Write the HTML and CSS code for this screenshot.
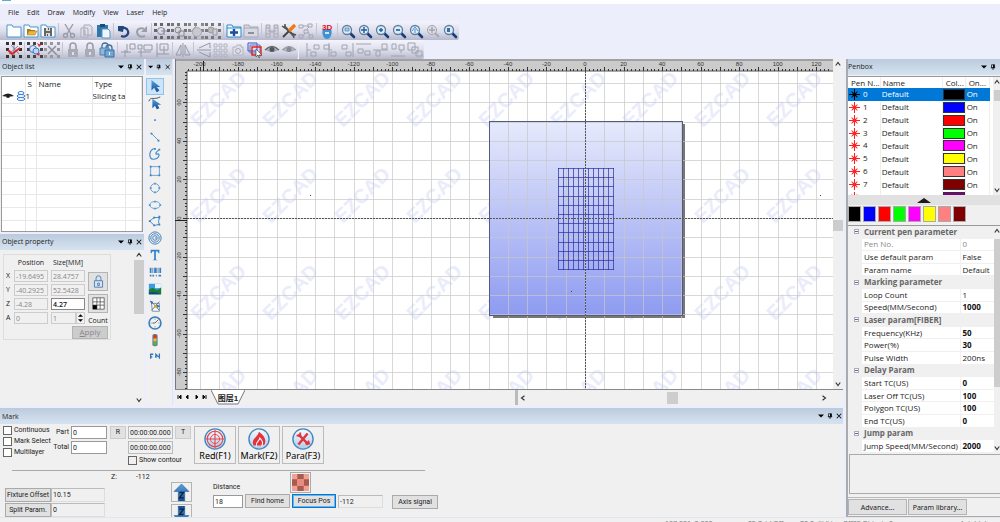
FILE: index.html
```html
<!DOCTYPE html>
<html lang="en">
<head>
<meta charset="utf-8">
<title>EZCAD</title>
<link rel="stylesheet" href="styles.css">
</head>
<body>
<svg class="defs" aria-hidden="true">
  <defs>
    <linearGradient id="blue" x1="0" y1="0" x2="0" y2="1"><stop offset="0" stop-color="#5aa2e0"/><stop offset="1" stop-color="#0f4f98"/></linearGradient>
    <linearGradient id="area" x1="0" y1="0" x2="0" y2="1"><stop offset="0" stop-color="#e6eafc"/><stop offset="1" stop-color="#8e9bf0"/></linearGradient>
    <linearGradient id="disc" x1="0" y1="0" x2="0" y2="1"><stop offset="0" stop-color="#f6fbff"/><stop offset="1" stop-color="#aecbe8"/></linearGradient>
    <g id="nodes"><path d="M0 0h3v3H0zM6 0h3v3H6zM13 0h3v3h-3zM0 6h3v3H0zM13 6h3v3h-3zM0 13h3v3H0zM6 13h3v3H6zM13 13h3v3h-3z"/></g>
    <symbol id="new" viewBox="0 0 16 16"><path d="M1 2h5l1 2h8v10H1z" fill="#fcfdff" stroke="#4a97cf"/></symbol>
    <symbol id="open" viewBox="0 0 16 16"><path d="M1 2h5l1 2h8v10H1z" fill="#fcfdff" stroke="#4a97cf"/><path d="M4 12V6h3l1 1h4v2z" fill="#a87a14"/><path d="M4 12l2-4h8l-2 4z" fill="#ecb63c" stroke="#a87a14" stroke-width=".5"/></symbol>
    <symbol id="save" viewBox="0 0 16 16"><path d="M1 2h5l1 2h8v10H1z" fill="#fcfdff" stroke="#4a97cf"/><path d="M4 5h8v8H4z" fill="#666"/><path d="M6 5h4v3H6zM6 10h4v3H6z" fill="#ddd"/><path d="M8 5h1v2H8zM7 11h1v2H7z" fill="#555"/></symbol>
    <symbol id="cut" viewBox="0 0 16 16"><g fill="none" stroke="#9a9ca8" stroke-width="1.4"><path d="M4 1l6 10M12 1L6 11"/><circle cx="4.500" cy="12.500" r="2"/><circle cx="11.500" cy="12.500" r="2"/></g></symbol>
    <symbol id="copy" viewBox="0 0 16 16"><path d="M6 2h6l2 2v8H6zM3 5h6l1 1v8H3z" fill="#dfe0ea" stroke="#a9abb8"/><path d="M5 8h3M5 10h3M5 12h3" stroke="#a9abb8"/></symbol>
    <symbol id="paste" viewBox="0 0 16 16"><path d="M2 2h11v12H2z" fill="#2f78ad"/><path d="M5 1h5v3H5z" fill="#1d4d75"/><path d="M7 6h6l2 2v7H7z" fill="#eef6fd" stroke="#5a93bf"/></symbol>
    <symbol id="undo" viewBox="0 0 16 16"><path d="M5 13c5 2 8-2 7-5s-4-4-7-2" fill="none" stroke="#24467e" stroke-width="2.200"/><path d="M2 3l6 0-1 6-5-1z" fill="#24467e"/></symbol>
    <symbol id="redo" viewBox="0 0 16 16"><path d="M12 13c-5 2-8-1-8-4s4-5 7-3" fill="none" stroke="#9b9eaa" stroke-width="2"/><path d="M14 3v6H8z" fill="#9b9eaa"/></symbol>
    <symbol id="group1" viewBox="0 0 16 16"><use href="#nodes" fill="#666"/><circle cx="7" cy="8" r="3.500" fill="none" stroke="#8a8c98"/><path d="M7 8h6M10 5v7" stroke="#8a8c98"/></symbol>
    <symbol id="group2" viewBox="0 0 16 16"><use href="#nodes" fill="#777"/><circle cx="7" cy="7" r="3" fill="#d4d5de" stroke="#888"/><path d="M8 8h5v5H8z" fill="none" stroke="#888"/></symbol>
    <symbol id="group3" viewBox="0 0 16 16"><use href="#nodes" fill="#888"/><circle cx="9" cy="9" r="4.500" fill="#c7c8d0" stroke="#aaa"/><path d="M3 9l5-6" stroke="#999"/></symbol>
    <symbol id="group4" viewBox="0 0 16 16"><use href="#nodes" fill="#777"/><circle cx="6" cy="7" r="3" fill="#bbb" stroke="#999"/><path d="M8 6h4v6H8z" fill="#cfd0d8" stroke="#999"/></symbol>
    <symbol id="fplus" viewBox="0 0 16 16"><path d="M1 2h5l1 2h8v10H1z" fill="#f3faff" stroke="#2d8bcd"/><path d="M1 5h14" stroke="#2d8bcd"/><path d="M8 6v7M4 9.500h8" stroke="#1b4f9c" stroke-width="2.400"/></symbol>
    <symbol id="fminus" viewBox="0 0 16 16"><path d="M1 2h5l1 2h8v10H1z" fill="#d7d8e2" stroke="#a6a8b6"/><path d="M1 5h14" stroke="#a6a8b6"/><path d="M5 10h6" stroke="#8d8f9d" stroke-width="2"/></symbol>
    <symbol id="hatch" viewBox="0 0 16 16"><path d="M2 2h4v12H2zM10 2h4v12h-4z" fill="#d2d3dd" stroke="#a6a8b4"/><path d="M2 5h4M10 5h4M4 8h8M2 11h4M10 11h4M6 9h4" stroke="#a6a8b4"/></symbol>
    <symbol id="tools" viewBox="0 0 16 16"><path d="M3 3l10 10" stroke="#555" stroke-width="2.400"/><path d="M1 3l3 2V1M15 12l-3-1 1 4" fill="none" stroke="#555" stroke-width="1.500"/><path d="M2 14l6-6" stroke="#444" stroke-width="2"/><path d="M8 8l6-6" stroke="#f07a18" stroke-width="3.200"/></symbol>
    <symbol id="flow" viewBox="0 0 16 16"><g fill="none" stroke="#a4a6b2"><path d="M1 2h4v3H1zM10 1h4v3h-4zM1 12h4v3H1zM11 12h4v3h-4zM6 7h4v3H6zM5 3l6 0M8 7l3-3M5 13l2-3M10 9l2 3"/></g></symbol>
    <symbol id="three" viewBox="0 0 16 16"><path d="M4 6c-2 5 1 10 4 10s6-5 4-10z" fill="#3f93d3"/><path d="M6 9h4v2H6z" fill="#cfe6f7"/><text x="3" y="7" class="t3d">3D</text></symbol>
    <symbol id="lens" viewBox="0 0 16 16"><path d="M10 10l4 4" stroke="#173f7c" stroke-width="2.600" stroke-linecap="round"/><circle cx="7" cy="7" r="4.500" fill="#d9ecfa" stroke="#5f7f9f" stroke-width="1.300"/></symbol>
    <symbol id="zwin" viewBox="0 0 16 16"><use href="#lens"/><path d="M5 5h4v3H5z" fill="#a9cde8" stroke="#3870a5" stroke-width=".6"/></symbol>
    <symbol id="zmove" viewBox="0 0 16 16"><use href="#lens"/><path d="M7 4v6M4 7h6" stroke="#235b9a" stroke-width="1.400"/></symbol>
    <symbol id="zin" viewBox="0 0 16 16"><use href="#lens"/><path d="M7 5v4M5 7h4" stroke="#235b9a" stroke-width="1.400"/></symbol>
    <symbol id="zout" viewBox="0 0 16 16"><use href="#lens"/><path d="M5 7h4" stroke="#235b9a" stroke-width="1.600"/></symbol>
    <symbol id="zall" viewBox="0 0 16 16"><use href="#lens"/><path d="M4 8l3-4 3 4M7 6v4" fill="none" stroke="#5593c8"/></symbol>
    <symbol id="zgray" viewBox="0 0 16 16"><path d="M10 10l4 4" stroke="#aaacb7" stroke-width="2.400"/><circle cx="7" cy="7" r="4.500" fill="#dcdde6" stroke="#a2a4b0"/><path d="M7 4v6M4 7h6" stroke="#8d8f9b"/></symbol>
    <symbol id="zpage" viewBox="0 0 16 16"><use href="#lens"/><path d="M5 5h3v4H5z" fill="#3c6d9e"/></symbol>
    <symbol id="check" viewBox="0 0 16 16"><use href="#nodes" fill="#333"/><path d="M5 3l8 9M3 12l9-8M8 2v12" stroke="#667" stroke-width=".7"/><path d="M2 8l4 4 8-6" fill="none" stroke="#e02025" stroke-width="1.800"/></symbol>
    <symbol id="swap" viewBox="0 0 16 16"><use href="#nodes" fill="#444"/><circle cx="6" cy="7" r="3.500" fill="none" stroke="#3b79c4"/><circle cx="9" cy="9" r="3" fill="#bcd6f2" stroke="#3b79c4"/><path d="M10 1l4 2-2 2zM12 14l-3-2 4-1z" fill="#e02a2a"/></symbol>
    <symbol id="nosel" viewBox="0 0 16 16"><use href="#nodes" fill="#999"/><path d="M4 4l9 9M12 4l-8 8" stroke="#8b8d99" stroke-width="1.500"/></symbol>
    <symbol id="glock" viewBox="0 0 16 16"><path d="M5 8V4q0-3 3-3t3 3v4" fill="none" stroke="#9a9ca8" stroke-width="1.600"/><path d="M3 7h10v8H3z" fill="#a8aab6"/><path d="M7 10h2v3H7z" fill="#dfe0e8"/></symbol>
    <symbol id="block" viewBox="0 0 16 16"><path d="M3 7V4q0-3 3-3t3 3v3M7 9V6q0-3 3-3t3 3v3" fill="none" stroke="#3e6f9e" stroke-width="1.300"/><path d="M1 6h9v7H1z" fill="#8db8dc" stroke="#4e7fae"/><path d="M6 8h9v7H6z" fill="#6fa8d8" stroke="#3c6d9d"/><path d="M10 10h1v3h-1z" fill="#fff"/></symbol>
    <symbol id="al1" viewBox="0 0 16 16"><g fill="none" stroke="#9698a6"><path d="M10 2h5v5h-5zM7 2v9M1 10h10M5 8v7"/></g></symbol>
    <symbol id="al2" viewBox="0 0 16 16"><g fill="none" stroke="#9698a6"><path d="M1 3h4v4H1zM7 3h8v5H7zM4 8v7M1 10h13"/></g></symbol>
    <symbol id="al3" viewBox="0 0 16 16"><g fill="none" stroke="#9698a6"><path d="M3 1v14M6 2h8v6H6zM10 4v8M3 12h12"/></g></symbol>
    <symbol id="mir" viewBox="0 0 16 16"><g fill="none" stroke="#9698a6"><path d="M8 1v14M6 3v10H1zM10 3v10h5z"/></g></symbol>
    <symbol id="mirv" viewBox="0 0 16 16"><g fill="none" stroke="#9698a6"><path d="M1 8h14M14 6V1L3 6M14 10v5L3 10"/></g></symbol>
    <symbol id="array" viewBox="0 0 16 16"><g fill="none" stroke="#b1b3bf"><path d="M1 2h3v3H1zM6 2h3v3H6zM11 2h3v3h-3zM1 7h3v3H1zM6 7h3v3H6zM11 7h3v3h-3zM1 12h3v3H1zM6 12h3v3H6zM11 12h3v3h-3z"/></g></symbol>
    <symbol id="cam" viewBox="0 0 16 16"><path d="M3 5h3l1-2h4v2h2v8H3z" fill="#dedfe8" stroke="#b2b4c0"/><circle cx="8" cy="9" r="2.500" fill="none" stroke="#a6a8b4"/></symbol>
    <symbol id="layers" viewBox="0 0 16 16"><g fill="none"><path d="M1 1h9v8H1z" stroke="#3556c0"/><path d="M3 3h10v8H3z" stroke="#5e70c4"/><path d="M5 5h9v8H5z" stroke="#e02424" stroke-width="1.400"/></g><path d="M9 7v8l2-2 1 3 1-1-1-2h3z" fill="#fff" stroke="#333" stroke-width=".6"/></symbol>
    <symbol id="eye" viewBox="0 0 16 16"><path d="M1 8q7-7 14 0q-7 4-14 0" fill="#a7a9b4"/><circle cx="8" cy="7.500" r="2.500" fill="#53555d"/><path d="M1 8q7-7 14 0" stroke="#666" stroke-width="1.200" fill="none"/></symbol>
    <symbol id="eye2" viewBox="0 0 16 16"><path d="M1 8q7-7 14 0q-7 4-14 0" fill="#aeb0ba"/><circle cx="8" cy="7.500" r="2.500" fill="#878993"/><path d="M1 8q7-7 14 0" stroke="#8e909a" fill="none"/></symbol>
    <symbol id="d1" viewBox="0 0 16 16"><path d="M2 1v14M2 8h4M6 10h5v4H6zM9 3h5v4H9z" fill="none" stroke="#a0a2af"/></symbol>
    <symbol id="d2" viewBox="0 0 16 16"><path d="M7 1v14M2 3h5v4H2zM9 10h5v4H9zM7 8h3" fill="none" stroke="#a0a2af"/></symbol>
    <symbol id="d3" viewBox="0 0 16 16"><path d="M14 1v14M3 3h5v4H3zM7 10h5v4H7z" fill="none" stroke="#a0a2af"/></symbol>
    <symbol id="d4" viewBox="0 0 16 16"><path d="M0 2h15M2 7h5v4H2zM9 9h5v4H9z" fill="none" stroke="#a0a2af"/></symbol>
    <symbol id="d5" viewBox="0 0 16 16"><path d="M0 8h15M3 9h4v5H3zM9 2h5v5H9z" fill="none" stroke="#a0a2af"/></symbol>
    <symbol id="d6" viewBox="0 0 16 16"><path d="M2 2h4v5H2zM9 3h5v5H9zM11 8v3M1 14h14" fill="none" stroke="#a0a2af"/></symbol>
    <symbol id="d7" viewBox="0 0 16 16"><path d="M1 1h7v7H1zM5 5h6v6H5zM9 9h6v5H9z" fill="none" stroke="#a0a2af"/></symbol>

    <symbol id="pick" viewBox="0 0 16 16"><path d="M4 1v12l3-3 3 5 3-2-3-4h4z" fill="url(#blue)"/></symbol>
    <symbol id="node" viewBox="0 0 16 16"><path d="M1 6C3 0 7 5 14 1" fill="none" stroke="#345"/><path d="M5 3v11l3-3 2 4 3-1-2-4h4z" fill="url(#blue)"/></symbol>
    <symbol id="dot" viewBox="0 0 16 16"><path d="M7 7h2v2H7z" fill="#4b8fd0"/></symbol>
    <symbol id="line" viewBox="0 0 16 16"><path d="M4 4l8 8" stroke="#4b8fd0"/><path d="M3 3h2v2H3zM11 11h2v2h-2z" fill="#2f78c0"/></symbol>
    <symbol id="curve" viewBox="0 0 16 16"><path d="M8 2C1 2 0 14 6 14c7 0 8-7 5-6s-3-2 2-5" fill="none" stroke="#3d88cc" stroke-width="1.300"/><path d="M7 1h2v2H7zM12 2h2v2h-2z" fill="#3d88cc"/></symbol>
    <symbol id="rect" viewBox="0 0 16 16"><path d="M3 3h10v10H3z" fill="none" stroke="#5a9ad4"/><path d="M2 2h2v2H2zM12 2h2v2h-2zM2 12h2v2H2zM12 12h2v2h-2z" fill="#3d7fc0"/></symbol>
    <symbol id="circ" viewBox="0 0 16 16"><circle cx="8" cy="8" r="5" fill="none" stroke="#5a9ad4"/><path d="M7 2h2v2H7zM7 12h2v2H7zM2 7h2v2H2zM12 7h2v2h-2z" fill="#5a97d0"/></symbol>
    <symbol id="oval" viewBox="0 0 16 16"><ellipse cx="8" cy="8" rx="6" ry="4" fill="none" stroke="#5a9ad4"/><path d="M7 3h2v2H7zM7 11h2v2H7zM1 7h2v2H1zM13 7h2v2h-2z" fill="#5a97d0"/></symbol>
    <symbol id="poly" viewBox="0 0 16 16"><path d="M2 8l5-4h6l-1 5 1 3-6 1z" fill="none" stroke="#3d88cc" stroke-width="1.100"/><path d="M12 2h2v3h-2zM6 12h2v2H6zM12 11h2v2h-2zM1 7h2v2H1zM6 3h2v2H6z" fill="#3d7fc0"/></symbol>
    <symbol id="spiral" viewBox="0 0 16 16"><g fill="none" stroke="#3d80bd" stroke-width="1.100"><circle cx="8" cy="8" r="7"/><circle cx="8" cy="8" r="4.800"/><circle cx="8" cy="8" r="2.600"/><path d="M8 8h2"/></g></symbol>
    <symbol id="text" viewBox="0 0 16 16"><path d="M3 2h10v4h-1l-1-2H9v9l2 1H5l2-1V4H5L4 6H3z" fill="#2f86cc"/></symbol>
    <symbol id="bar" viewBox="0 0 16 16"><path d="M2 3h2v6H2zM5 3h1v6H5zM7 3h3v6H7zM11 3h1v6h-1zM13 3h2v6h-2zM2 11h2v2H2zM5 11h2v2H5zM9 11h1v2H9zM12 11h3v2h-3z" fill="#3f7fc0"/></symbol>
    <symbol id="image" viewBox="0 0 16 16"><path d="M1 2h14v12H1z" fill="#3b9be2"/><path d="M8 2h7v5H8z" fill="#e4f4ff"/><path d="M1 9q4-4 7-1t7-2v8H1z" fill="#1f7d30"/><path d="M1 12q7-2 14 2H1z" fill="#0b4c86"/></symbol>
    <symbol id="vec" viewBox="0 0 16 16"><path d="M4 5h9v9H5z" fill="#f4f7fa" stroke="#6e8ba5"/><path d="M3 2l10 11M13 3L4 13" stroke="#567"/><path d="M7 7h4v3H7z" fill="#d2af22"/><path d="M2 2l4 1-2 3zM9 6l5 2-3 2z" fill="#3474b4"/></symbol>
    <symbol id="clock" viewBox="0 0 16 16"><circle cx="8" cy="8" r="6.800" fill="#eef1f4" stroke="#3a7cb8" stroke-width="1.800"/><path d="M8 8l4-4M8 8H5M8 3v1M8 12v1M3 8h1M12 8h1" stroke="#555"/></symbol>
    <symbol id="traffic" viewBox="0 0 16 16"><rect x="5" y="1" width="6" height="14" rx="2" fill="#66829a"/><circle cx="8" cy="4" r="2" fill="#e83024"/><circle cx="8" cy="8" r="2" fill="#f5ba24"/><circle cx="8" cy="12" r="2" fill="#45bd38"/></symbol>
    <symbol id="enc" viewBox="0 0 16 16"><path d="M3 5v6M3 6h3M3 9h2M8 9h2M13 5v6M12 9L9 6v4" fill="none" stroke="#2f78b8" stroke-width="1.500"/></symbol>

    <symbol id="star" viewBox="0 0 16 16"><path d="M8 0v16M0 8h16M8 8L4 4M8 8l4-4M8 8l-4 4M8 8l4 4" stroke="currentColor" stroke-width="1.500"/><path d="M3 3l10 10M13 3L3 13" stroke="currentColor" stroke-dasharray="1 1" opacity=".7"/><circle cx="8" cy="8" r="3" fill="currentColor"/></symbol>
    <symbol id="pin" viewBox="0 0 8 8"><path d="M2 1h4v4H2zM1 5h6M4 5v3" fill="none" stroke="#111"/><path d="M4 1h2v4H4z"/></symbol>
    <symbol id="down" viewBox="0 0 8 8"><path d="M0 2h8L4 6z"/></symbol>
    <symbol id="x" viewBox="0 0 8 8"><path d="M1 1l6 6M7 1L1 7" stroke="#111" stroke-width="1.400"/></symbol>
    <symbol id="chev" viewBox="0 0 8 8"><path d="M1 6l3-4 3 4" fill="none" stroke="#333" stroke-width="1.500"/></symbol>
    <symbol id="arrow" viewBox="0 0 16 16"><path d="M8 0l7 7h-4v9H5V7H1z" fill="url(#blue)" stroke="#1b4f8c" stroke-width=".5"/><path d="M6 8h4L6 13h4" fill="none" stroke="#123" stroke-width="1.200"/></symbol>
  </defs>
</svg>

<div class="app">
  <header>
    <div class="title"><span class="logo"></span></div>
    <nav class="menu"><button>File</button><button>Edit</button><button>Draw</button><button>Modify</button><button>View</button><button>Laser</button><button>Help</button></nav>
    <div class="bars"><div class="bar" data-icons="new open save | cut copy paste | undo redo | group1 group2 group3 group4 | fplus fminus | hatch tools flow | three | zwin zmove zin zout zall zgray zpage"></div></div>
    <div class="bars">
      <div class="bar" data-icons="check | swap nosel | glock glock block | al1 al2 al3 | mir | mirv array cam layers eye eye2"></div>
      <div class="bar" data-icons="d1 d2 d3 d4 d5 d6 d7"></div>
    </div>
  </header>

  <main class="body">
    <div class="work">
      <div class="upper">
        <div class="dock">
          <section class="panel objects">
            <h2 class="head"><span>Object list</span><svg><use href="#down"/></svg><svg><use href="#pin"/></svg><svg><use href="#x"/></svg></h2>
            <div class="listbox">
              <table class="objtable">
                <colgroup><col class="c1"><col class="c2"><col class="c3"><col class="c4"><col></colgroup>
                <thead><tr><th></th><th>S</th><th>Name</th><th>Type</th><th></th></tr></thead>
                <tbody>
                  <tr><td><svg class="eyeicon" viewBox="0 0 12 8"><path d="M0 4q6-5 12 0q-6 1-12 0" fill="#222"/><circle cx="6" cy="4" r="2" fill="#222"/></svg></td><td class="one"><svg class="slice" viewBox="0 0 10 10"><g fill="none" stroke="#3b80d8"><ellipse cx="5" cy="2" rx="3" ry="1.500"/><ellipse cx="5" cy="5" rx="4" ry="1.500"/><ellipse cx="5" cy="8" rx="4" ry="1.500"/></g></svg>1</td><td></td><td>Slicing ta</td><td></td></tr>
                  <tr><td></td><td></td><td></td><td></td><td></td></tr><tr><td></td><td></td><td></td><td></td><td></td></tr><tr><td></td><td></td><td></td><td></td><td></td></tr><tr><td></td><td></td><td></td><td></td><td></td></tr><tr><td></td><td></td><td></td><td></td><td></td></tr><tr><td></td><td></td><td></td><td></td><td></td></tr><tr><td></td><td></td><td></td><td></td><td></td></tr><tr><td></td><td></td><td></td><td></td><td></td></tr><tr><td></td><td></td><td></td><td></td><td></td></tr><tr><td></td><td></td><td></td><td></td><td></td></tr>
                </tbody>
              </table>
            </div>
          </section>
          <section class="panel props">
            <h2 class="head"><span>Object property</span><svg><use href="#down"/></svg><svg><use href="#pin"/></svg><svg><use href="#x"/></svg></h2>
            <div class="propbody">
              <div class="form">
                <b></b><span class="cap">Position</span><span class="cap">Size[MM]</span><b></b>
                <label for="px">X</label><input id="px" value="-19.6495" disabled><input aria-label="Size X" value="28.4757" disabled>
                <div class="side">
                  <button aria-label="Lock ratio"><svg viewBox="0 0 16 16"><path d="M5 7V4q0-3 3-3t3 3v3M3 7h10v8H3zM7 10h2v3H7z" fill="none" stroke="#4a86c4" stroke-width="1.200"/></svg></button>
                  <button aria-label="Anchor"><svg viewBox="0 0 16 16"><path d="M1 1h14v14H1zM6 1v14M10 1v14M1 6h14M1 10h14" fill="#fff" stroke="#555"/><path d="M1 10h5v5H1z"/></svg></button>
                  <span>Count</span>
                </div>
                <label for="py">Y</label><input id="py" value="-40.2925" disabled><input aria-label="Size Y" value="52.5428" disabled>
                <label for="pz">Z</label><input id="pz" value="-4.28" disabled><input aria-label="Size Z" class="live" value="4.27">
                <label for="pa">A</label><input id="pa" value="0" disabled><div class="spin"><input aria-label="Count" value="1" disabled><i><svg><use href="#down"/></svg><svg><use href="#down"/></svg></i></div>
                <button class="apply" disabled><u>A</u>pply</button>
              </div>
              <div class="vbar"><svg><use href="#chev"/></svg><i class="thumb"></i><svg class="flip"><use href="#chev"/></svg></div>
            </div>
          </section>
        </div>

        <section class="panel toolbox">
          <h2 class="head"><svg><use href="#down"/></svg><svg><use href="#pin"/></svg><svg><use href="#x"/></svg></h2>
          <div class="tools" data-icons="pick node dot line curve rect circ oval poly spiral text bar image vec clock traffic enc"></div>
        </section>

        <section class="stage">
          <div class="view">
            <svg class="canvas" id="canvas"></svg>
            <div class="vbar"><svg><use href="#chev"/></svg><i class="thumb"></i><svg class="flip"><use href="#chev"/></svg></div>
          </div>
          <div class="foot">
            <div class="sheets">
              <svg class="navs" viewBox="0 0 36 8"><path d="M3 2v4M6 2v4L4 4zM13 2v4l-2-2zM21 2v4l2-2zM28 2v4l2-2zM31 2v4" stroke="#111" stroke-width="1"/></svg>
              <div class="sheet"><svg viewBox="0 0 34 15"><path d="M0 0l7 14h20l7-14" fill="#fff" stroke="#777"/></svg><button>图层1</button></div>
            </div>
            <div class="hbar"><svg class="left"><use href="#chev"/></svg><i class="thumb"></i><svg class="right"><use href="#chev"/></svg></div>
          </div>
        </section>
      </div>

      <section class="panel mark">
        <h2 class="head"><span>Mark</span><svg><use href="#down"/></svg><svg><use href="#pin"/></svg><svg><use href="#x"/></svg></h2>
        <div class="run">
          <div class="checks"><label><input type="checkbox">Continuous</label><label><input type="checkbox">Mark Select</label><label><input type="checkbox">Multilayer</label></div>
          <div class="counts"><label for="part">Part</label><input id="part" value="0"><label for="total">Total</label><input id="total" value="0"></div>
          <div class="times">
            <button>R</button><input aria-label="Part time" value="00:00:00.000" readonly><button>T</button>
            <input class="second" aria-label="Total time" value="00:00:00.000" readonly>
            <label class="contour"><input type="checkbox">Show contour</label>
          </div>
          <button class="big"><svg viewBox="0 0 24 24"><circle cx="12" cy="12" r="11" fill="url(#disc)" stroke="#4285c0" stroke-width="1.500"/><g fill="none" stroke="#e8444c"><circle cx="12" cy="12" r="8.500" stroke-width="1.200"/><circle cx="12" cy="12" r="5"/><path d="M12 2v20M2 12h20" stroke-width="1.200"/></g></svg>Red(F1)</button>
          <button class="big"><svg viewBox="0 0 24 24"><circle cx="12" cy="12" r="11" fill="url(#disc)" stroke="#4285c0" stroke-width="1.500"/><path d="M6 19C3 12 10 11 12 4c7 5 8 10 6 14l-3 1z" fill="#e5333c"/><path d="M9 20c-1-5 4-6 4-9 4 4 3 6 2 9" fill="none" stroke="#fff" stroke-width="1.200"/></svg>Mark(F2)</button>
          <button class="big"><svg viewBox="0 0 24 24"><circle cx="12" cy="12" r="11" fill="url(#disc)" stroke="#4285c0" stroke-width="1.500"/><path d="M7 7l11 11M17 6L7 18" stroke="#e5333c" stroke-width="2.600"/><path d="M5 8l4 1V5M15 18l3-3 1 3" fill="none" stroke="#e5333c" stroke-width="2"/></svg>Para(F3)</button>
        </div>
        <div class="axis">
          <div class="offsets"><button>Fixture Offset</button><input aria-label="Fixture Offset" value="10.15" readonly><button>Split Param.</button><input aria-label="Split Param" value="0" readonly></div>
          <div class="zpos"><span>Z:</span><span>-112</span></div>
          <div class="moves"><button aria-label="Up"><svg><use href="#arrow"/></svg></button><button aria-label="Down"><svg class="flip"><use href="#arrow"/></svg></button></div>
          <div class="focus">
            <label for="dist">Distance</label>
            <button class="checker" aria-label="Board"><svg viewBox="0 0 16 16"><path d="M0 0h16v16H0z" fill="#f2a091"/><path d="M5 0h6v5H5zM0 5h5v6H0zM11 5h5v6h-5zM5 11h6v5H5z" fill="#a85a50"/><path d="M5 5h6v6H5z" fill="#e98c80"/></svg></button>
            <input id="dist" value="18"><button>Find home</button><button class="on">Focus Pos</button><input class="ro" aria-label="Focus" value="-112" readonly>
          </div>
          <button class="signal">Axis signal</button>
        </div>
      </section>
    </div>

    <aside class="panel pen">
      <h2 class="head"><span>Penbox</span><svg><use href="#down"/></svg><svg><use href="#pin"/></svg></h2>
      <div class="penlist">
        <table class="pens">
          <colgroup><col class="p1"><col class="p2"><col class="p3"><col class="p4"><col></colgroup>
          <thead><tr><th>Pen N...</th><th>Name</th><th>Col...</th><th>On...</th><th></th></tr></thead>
          <tbody id="pens"></tbody>
        </table>
        <div class="vbar"><svg><use href="#chev"/></svg><i class="thumb"></i><svg class="flip"><use href="#chev"/></svg></div>
      </div>
      <button class="fold" aria-label="Collapse"></button>
      <div class="swatches" id="swatches"></div>
      <div class="paramwrap">
        <table class="params" id="params"></table>
        <div class="vbar"><svg><use href="#chev"/></svg><i class="thumb"></i><svg class="flip"><use href="#chev"/></svg></div>
      </div>
      <div class="desc"></div>
      <div class="penfoot"><button>Advance...</button><button>Param library...</button></div>
    </aside>
  </main>
  <footer class="status"><span>107.801, 0.000</span><span>SF:Grid.Off</span><span>P2:Split/Line:Off</span><span>SF:Objects:Snap</span><span>Axis/d:d</span></footer>
</div>
<script src="app.js"></script>
</body>
</html>
```
FILE: styles.css
```css
* { box-sizing: border-box; }
body { margin: 0; background: #eceefb; font: 8px/10px "Open Sans", "Noto Sans", "Noto Sans CJK SC", sans-serif; color: #222; }
button, input { font: inherit; color: inherit; margin: 0; padding: 0; min-width: 0; border-radius: 0; }
button { border: 1px solid #b4b4b4; background: #e1e1e1; white-space: nowrap; }
svg { display: block; }
.defs { position: absolute; width: 0; height: 0; }
.t3d { font: bold 8px "Liberation Sans", sans-serif; fill: #e0101c; }
.app { height: 100vh; display: flex; flex-direction: column; overflow: hidden; }

.title { height: 4px; background: #fff; padding-left: 2px; }
.logo { display: block; width: 9px; height: 1px; background: #5fa8dc; }
.menu { height: 17px; display: flex; align-items: center; gap: 8px; padding-left: 8px; font-size: 7px; }
.menu button { border: 0; background: none; }
.bars { display: flex; height: 19px; gap: 1px; }
.bar { display: flex; align-items: center; padding: 0 1px 0 5px; background: linear-gradient(#f3f4fc, #dcddea 55%, #b6b8cc); border-radius: 0 2px 2px 0; }
.bar button { width: 17px; height: 17px; border: 0; background: none; display: grid; place-items: center; }
.bar button svg { width: 16px; height: 16px; }
.bar hr { width: 1px; height: 15px; margin: 0 1px 0 2px; border: 0; background: #c3c5d3; }

.body { flex: 1; min-height: 0; display: flex; gap: 3px; }
.work { flex: 1; min-width: 0; display: flex; flex-direction: column; gap: 3px; }
.upper { flex: 1; min-height: 0; display: flex; gap: 2px; }
.panel { background: #f0f0f0; }
.head { height: 16px; margin: 0; padding: 0 2px; display: flex; align-items: center; gap: 3px; background: linear-gradient(#bccbdc, #d5e3f1); font-size: 7px; font-weight: normal; }
.head span { flex: 1; }
.head svg { width: 6px; height: 6px; }
.dock { width: 144px; display: flex; flex-direction: column; gap: 2px; }
.objects { height: 173px; display: flex; flex-direction: column; }
.listbox { flex: 1; margin: 1px 1px 0; background: #fff; border: 1px solid #999; overflow: hidden; }
table { border-collapse: collapse; table-layout: fixed; width: 100%; }
th, td { padding: 0; font-weight: normal; text-align: left; white-space: nowrap; overflow: hidden; }
.objtable td, .objtable th { height: 13px; border-right: 1px solid #e8e8e8; border-bottom: 1px solid #e8e8e8; }
.objtable th { border-bottom: 0; padding-left: 2px; }
.c1 { width: 23px; } .c2 { width: 11px; } .c3 { width: 56px; } .c4 { width: 33px; }
.eyeicon { width: 12px; height: 8px; }
.objtable .one { overflow: visible; }
.slice { width: 10px; height: 10px; float: left; margin-left: -10px; }

.props { flex: 1; min-height: 0; display: flex; flex-direction: column; }
.propbody { flex: 1; min-height: 0; display: flex; justify-content: space-between; }
.form { align-self: flex-start; margin: 4px 0 0 3px; padding: 2px 2px 1px; border: 1px solid #ddd; display: grid; grid-template-columns: 5px 34px 34px 20px; column-gap: 3px; row-gap: 2px; grid-template-rows: 11px repeat(5, 12px); font-size: 7px; align-items: center; }
.cap { text-align: center; font-size: 7px; }
.form input { width: 100%; height: 12px; padding-left: 1px; border: 1px solid #ccc; background: #f0f0f0; color: #888; }
.form .live { border-color: #888; background: #fff; color: #111; font-weight: 600; }
.side { grid-column: 4; grid-row: 2 / 6; align-self: start; display: flex; flex-direction: column; gap: 3px; padding-top: 2px; align-items: center; }
.side button { width: 20px; height: 19px; padding: 2px; display: grid; place-items: center; }
.side button svg { width: 13px; height: 13px; }
.spin { display: flex; }
.spin i { width: 12px; border: 1px solid #ccc; display: flex; flex-direction: column; align-items: center; }
.spin i svg { width: 5px; height: 5px; }
.spin i svg:first-child { transform: rotate(180deg); }
.apply { grid-column: 3 / 5; justify-self: end; width: 36px; height: 13px; background: #ccc; color: #888; font-size: 8px; line-height: 10px; }
.vbar { width: 10px; background: #f0f0f0; display: flex; flex-direction: column; align-items: center; padding: 2px 0; flex: none; }
.vbar svg, .hbar svg { width: 6px; height: 6px; flex: none; }
.flip { transform: rotate(180deg); }
.thumb { background: #cdcdcd; display: block; }
.vbar .flip { margin-top: auto; }
.vbar .thumb { width: 100%; }
.props .thumb { height: 54px; margin-top: 2px; }

.toolbox { width: 27px; border-right: 1px solid #dfe3f3; }
.toolbox .head { justify-content: center; }
.tools { display: flex; flex-direction: column; justify-content: space-between; height: 287px; margin-top: 3px; }
.tools button { width: 18px; height: 17px; border: 1px solid transparent; background: none; display: grid; place-items: center; }
.tools button:first-child { background: #cce4f7; border-color: #8fc3ee; }
.tools svg { width: 14px; height: 14px; }

.stage { flex: 1; min-width: 0; display: flex; flex-direction: column; background: #f0f0f0; }
.view { flex: 1; min-height: 0; display: flex; }
.canvas { flex: 1; min-width: 0; height: 100%; background: #fff; }
.view .thumb { height: 11px; margin-top: 153px; }
.ruler { font: 6px "Liberation Sans", sans-serif; fill: #333; text-anchor: middle; }
.water { font: bold 20px "Liberation Sans", sans-serif; fill: #eaecfc; text-anchor: middle; }
.foot { height: 16px; display: flex; border-top: 1px solid #888; }
.sheets { width: 343px; display: flex; border-right: 3px solid #bbb; }
.navs { width: 36px; height: 8px; margin-top: 3px; }
.sheet { display: grid; width: 34px; }
.sheet > * { grid-area: 1 / 1; }
.sheet svg { width: 34px; height: 15px; }
.sheet button { border: 0; background: none; font: bold 8px "Liberation Sans", "Noto Sans CJK SC", sans-serif; }
.hbar { flex: 1; display: flex; align-items: center; padding: 0 16px 0 2px; }
.hbar .thumb { width: 11px; height: 12px; margin-left: 141px; }
.left { transform: rotate(-90deg); }
.right { transform: rotate(90deg); margin-left: auto; }

.mark { font: 7px/9px Roboto, sans-serif; height: 109px; overflow: hidden; }
.mark .head { padding-right: 1px; font-family: "Open Sans", sans-serif; }
.mark input { width: 100%; height: 13px; padding: 0 1px; border: 1px solid #999; background: #fff; }
.mark input[type=checkbox] { appearance: none; flex: none; width: 9px; height: 9px; padding: 0; border: 1px solid #666; }
.mark label { white-space: nowrap; }
.run { height: 46px; margin: 1px 0 0 3px; padding-top: 1px; display: flex; align-items: flex-start; gap: 3px; }
.checks { width: 47px; display: flex; flex-direction: column; gap: 2px; }
.checks label, .contour { display: flex; gap: 2px; }
.counts { width: 54px; display: grid; grid-template-columns: 17px 36px; column-gap: 1px; row-gap: 2px; align-items: center; }
.counts label { text-align: right; padding-right: 1px; }
.times { width: 81px; display: grid; grid-template-columns: 16px 45px 16px; gap: 2px; }
.times button { height: 13px; border-color: #ccc; }
.times input { background: #f0f0f0; border-color: #bbb; }
.times .second { grid-column: 2; }
.contour { grid-column: 2 / 4; }
.big { width: 42px; height: 38px; flex: none; border: 1px solid #bbb; background: #f0f0f0; display: flex; flex-direction: column; align-items: center; padding-top: 1px; font: 9px/12px "Noto Sans", sans-serif; color: #000; }
.run .big + .big { margin-left: -1px; }
.big svg { width: 22px; height: 22px; }
.axis { margin-left: 5px; display: flex; align-items: flex-start; position: relative; }
.axis::before { content: ""; position: absolute; left: 7px; top: -1px; width: 413px; height: 1px; background: #aaa; }
.offsets { width: 101px; display: grid; grid-template-columns: 46px 54px; gap: 1px 0; padding-top: 17px; }
.offsets button, .offsets input, .focus > button, .signal { height: 14px; border-color: #aaa; }
.mark .offsets input, .mark .focus .ro { background: #f0f0f0; border-color: #bbb #ddd #ddd #bbb; }
.zpos { width: 65px; padding: 2px 0 0 5px; display: flex; gap: 19px; }
.moves { width: 42px; padding-top: 11px; display: flex; flex-direction: column; gap: 2px; }
.moves button { width: 21px; height: 20px; padding: 1px; background: #f0f0f0; display: grid; place-items: center; }
.moves svg { width: 17px; height: 17px; }
.focus { display: grid; grid-template-columns: 30px 45px 44px 45px; gap: 1px 2px; padding-top: 1px; align-items: end; }
.focus label { grid-column: 1 / 3; padding-bottom: 1px; }
.focus .checker { height: 21px; width: 21px; margin-left: -2px; padding: 1px; background: #f0f0f0; display: grid; place-items: center; grid-column: 3 / 5; }
.checker svg { width: 17px; height: 17px; }
.focus .on { border: 1px solid #0078d7; outline: 1px solid #6eb2ea; outline-offset: -2px; }
.signal { width: 46px; margin: 24px 0 0 9px; }

.pen { width: 154px; border: solid #aaa; border-width: 0 0 1px 2px; display: flex; flex-direction: column; }
.pen .head { padding: 0 4px 0 0; }
.penlist { height: 119px; margin-top: 1px; display: flex; align-items: flex-start; overflow: hidden; background: #fff; border-top: 1px solid #999; }
.penlist .vbar, .paramwrap .vbar { width: 6px; align-self: stretch; }
.penlist .vbar .thumb { height: 11px; margin-top: 5px; }
.pens { height: 127px; flex: 1; width: auto; }
.pens td, .pens th { height: 11px; line-height: 10px; border-right: 1px solid #eee; }
.pens th { padding-left: 3px; }
.p1 { width: 31px; } .p2 { width: 62px; } .p3 { width: 23px; } .p4 { width: 24px; }
.pens th:nth-child(2) { padding-left: 2px; }
.pens td:first-child, .pens td:nth-child(2), .pens td:nth-child(4) { padding-left: 1px; }
.pens svg { width: 11px; height: 11px; float: left; margin-right: 3px; color: #f22; }
.pens .sel td:not(:last-child) { background: #0078d7; color: #fff; border-color: #0078d7; }
.pens .sel svg { color: #000; }
.chip { display: block; height: 11px; border: 1px solid #333; }
.fold { height: 10px; border: 0; background: #e1e1e1; display: grid; place-items: center; flex: none; }
.fold::after { content: ""; border: solid transparent; border-width: 0 7px 5px; border-bottom-color: #221818; }
.swatches { display: flex; gap: 2px; padding: 1px 0 3px; border-bottom: 1px solid #999; flex: none; }
.swatches button { width: 13px; height: 16px; border: 1px solid #aaa; }
.paramwrap { height: 227px; display: flex; flex: none; overflow: hidden; }
.paramwrap .thumb { height: 148px; margin-top: 5px; }
.params { height: 227px; flex: 1; width: auto; }
.params td, .params th { line-height: 10px; background: #fff; border-bottom: 1px solid #f0f0f0; padding-left: 2px; }
.params .gut, .params .sec { background: #f0f0f0; }
.params .gut { padding-left: 6px; }
.params .val { border-left: 1px solid #f0f0f0; }
.params .sec { font-weight: bold; color: #666; }
.params .off { color: #888; }
.params .strong { font-weight: bold; color: #111; }
.g1 { width: 14px; } .g3 { width: 34px; }
.box { display: block; width: 5px; height: 5px; border: 1px solid #aab; background: linear-gradient(#669, #669) center / 3px 1px no-repeat #fff; }
.desc { flex: 1; min-height: 0; margin: 1px 0 3px 1px; border: 1px solid #aaa; border-right: 0; }
.penfoot { border-top: 1px solid #bbb; display: flex; gap: 1px; padding: 1px 0 1px; font: 7px/9px "Noto Sans", sans-serif; }
.penfoot button { width: 59px; height: 16px; }
.status { height: 5px; overflow: hidden; background: #f0f0f0; color: #777; font: 7px/9px "Noto Sans", sans-serif; display: grid; grid-template-columns: 83px 52px 53px 107px 40px; justify-content: end; padding-top: 1px; border-top: 1px solid #e2e4f0; }
```
FILE: app.js
```js
const icon = name => `<button aria-label="${name}"><svg><use href="#${name}"/></svg></button>`;
document.querySelectorAll('[data-icons]').forEach(bar => {
  bar.innerHTML = bar.dataset.icons.split(' ').map(n => n === '|' ? '<hr>' : icon(n)).join('');
});

// Pens
const colors = ['#000', '#00f', '#f00', '#0f0', '#f0f', '#ff0', '#ff8080', '#800000', '#800080'];
document.getElementById('pens').innerHTML = colors.map((c, i) =>
  `<tr class="${i ? '' : 'sel'}"><td><svg><use href="#star"/></svg>${i < 8 ? i : ''}</td><td>${i < 8 ? 'Default' : ''}</td><td><span class="chip" style="background:${c}"></span></td><td>${i < 8 ? 'On' : ''}</td><td></td></tr>`).join('');
document.getElementById('swatches').innerHTML = colors.slice(0, 8).map((c, i) =>
  `<button aria-label="Pen ${i}" style="background:${c}"></button>`).join('');

// Pen parameters: [name, value, value class]
const params = [
  ['Current pen parameter'], ['Pen No.', '0', 'off'], ['Use default param', 'False', ''], ['Param name', 'Default', ''],
  ['Marking parameter'], ['Loop Count', '1', ''], ['Speed(MM/Second)', '1000', 'strong'],
  ['Laser param[FIBER]'], ['Frequency(KHz)', '50', 'strong'], ['Power(%)', '30', 'strong'], ['Pulse Width', '200ns', ''],
  ['Delay Param'], ['Start TC(US)', '0', 'strong'], ['Laser Off TC(US)', '100', 'strong'], ['Polygon TC(US)', '100', 'strong'], ['End TC(US)', '0', 'strong'],
  ['Jump param'], ['Jump Speed(MM/Second)', '2000', 'strong']
];
document.getElementById('params').innerHTML = '<colgroup><col class="g1"><col><col class="g3"></colgroup>' + params.map(([n, v, c]) =>
  v === undefined
    ? `<tr><td class="gut"><i class="box"></i></td><th class="sec" colspan="2">${n}</th></tr>`
    : `<tr><td class="gut"></td><td class="${c === 'off' ? c : ''}">${n}</td><td class="val ${c}">${v}</td></tr>`).join('');

// Drawing canvas; x0,y0 is the world origin and step is ten millimetres
const svg = document.getElementById('canvas');
const W = svg.clientWidth, H = svg.clientHeight, x0 = 410, y0 = 159, step = 19.27, R = 12;
let out = '';
const line = (x1, y1, x2, y2, s, extra = '') => { out += `<line x1="${x1}" y1="${y1}" x2="${x2}" y2="${y2}" stroke="${s}" ${extra}/>`; };
const snap = v => Math.round(v) + 0.5;
[40, 136, 233, 337].forEach(y => {
  for (let x = 43; x < W - 30; x += 72) out += `<text class="water" transform="translate(${x + 5} ${y + 5}) rotate(-45)">EZCAD</text>`;
});
out += `<rect x="318" y="65" width="192" height="194" fill="#777"/><rect x="314.500" y="62.500" width="193" height="194" fill="url(#area)"/>`;
for (let k = -20; k <= 12; k++) line(snap(x0 + k * step), R, snap(x0 + k * step), H, '#c8c8c8', 'opacity=".7"');
for (let k = -7; k <= 8; k++) line(R, snap(y0 + k * step), W, snap(y0 + k * step), '#c8c8c8', 'opacity=".7"');
out += `<rect x="314.500" y="62.500" width="193" height="194" fill="none" stroke="#555a80"/>`;
for (let k = 0; k <= 11; k++) {
  line(snap(383 + k * 5), 109, snap(383 + k * 5), 211, '#2b2fa0', 'opacity=".7"');
  line(383, snap(109 + k * 9.2), 439, snap(109 + k * 9.2), '#2b2fa0', 'opacity=".7"');
}
line(x0 + .5, R, x0 + .5, H, '#555', 'stroke-dasharray="2 1"');
line(R, y0 + .5, W, y0 + .5, '#555', 'stroke-dasharray="2 1"');
[[135, 136], [645, 136], [396, 232]].forEach(([x, y]) => { out += `<rect x="${x}" y="${y}" width="1" height="1" fill="#444"/>`; });
out += `<rect width="${W}" height="${R}" fill="#cbcbcb"/><rect width="${R}" height="${H}" fill="#cbcbcb"/>`;
line(0, 1, W, 1, '#777');
line(.5, 0, .5, H, '#777');
line(R, R, W, R, '#555');
line(R, R, R, H, '#555');
for (let k = -103; k <= 63; k++) {
  const x = x0 + k * step / 5;
  if (x > R && x < W) line(snap(x), R, snap(x), R - (k % 5 ? 2 : 4), '#333');
}
for (let k = -38; k <= 44; k++) {
  const y = y0 + k * step / 5;
  if (y > R && y < H) line(R, snap(y), R - (k % 5 ? 2 : 4), snap(y), '#333');
}
for (let v = -200; v <= 120; v += 20) out += `<text class="ruler" x="${x0 + v / 10 * step}" y="7">${v}</text>`;
for (let v = -80; v <= 60; v += 20) out += `<text class="ruler" transform="translate(6 ${y0 - v / 10 * step}) rotate(-90)">${v}</text>`;
line(28.5, 2, 28.5, R, '#222');
line(0, 161.5, R, 161.5, '#222');
svg.innerHTML = out;
```
